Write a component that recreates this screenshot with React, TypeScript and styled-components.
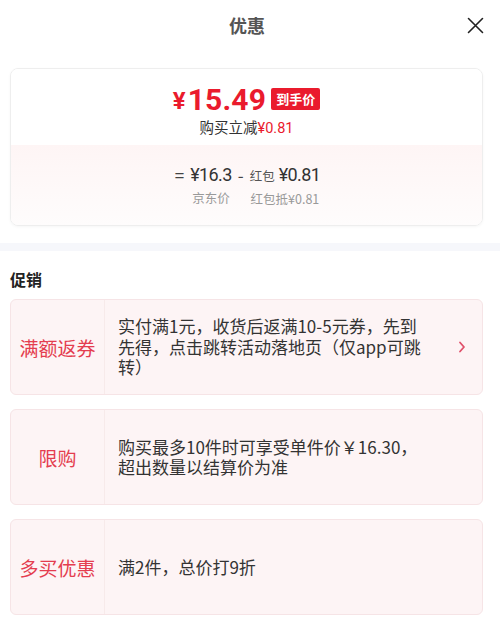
import React from "react";
import styled, { createGlobalStyle } from "styled-components";

const Global = createGlobalStyle`
  html, body { margin: 0; padding: 0; background: #fff; }
  body { font-family: "Noto Sans CJK SC", "Noto Sans", sans-serif; color: #333; }
  * { box-sizing: border-box; }
`;

const Page = styled.div`
  width: 500px;
  height: 622px;
  overflow: hidden;
  background: #fff;
`;

const Header = styled.div`
  position: relative;
  height: 50px;
  display: flex;
  align-items: center;
  justify-content: center;
`;

const Title = styled.div`
  font-size: 18px;
  font-weight: 700;
  color: #555;
  margin-left: -6px;
`;

const Close = styled.div`
  position: absolute;
  right: 16px;
  top: 17px;
  width: 17px;
  height: 17px;
  display: flex;
`;

const Wrap = styled.div`
  padding: 18px 17px 0 10px;
`;

const PriceCard = styled.div`
  border: 1px solid #eeeeee;
  border-radius: 8px;
  overflow: hidden;
  box-shadow: 0 1px 3px rgba(0, 0, 0, 0.04);
`;

const Top = styled.div`
  height: 76px;
  display: flex;
  flex-direction: column;
  align-items: center;
  padding-top: 14px;
  background: #fff;
`;

const PriceRow = styled.div`
  display: flex;
  align-items: center;
  color: #ea1b2d;
  font-family: Roboto, "Noto Sans CJK SC", sans-serif;
  font-weight: 700;
  height: 32px;
`;

const Yen = styled.span`
  font-size: 24px;
  margin-right: 2px;
  margin-top: 4px;
`;

const Big = styled.span`
  font-size: 30px;
  letter-spacing: 0.2px;
`;

const Badge = styled.span`
  margin-left: 5px;
  background: #ea1b2d;
  color: #fff;
  font-family: "Noto Sans CJK SC", sans-serif;
  font-size: 13px;
  font-weight: 700;
  height: 22px;
  line-height: 22px;
  padding: 0 5px;
  border-radius: 2px;
`;

const Sub = styled.div`
  font-size: 14.5px;
  color: #333;
  margin-top: 2px;
  line-height: 20px;
`;

const Red = styled.span`
  color: #ea1b2d;
  font-family: Roboto, "Noto Sans CJK SC", sans-serif;
`;

const Bottom = styled.div`
  height: 80px;
  background: linear-gradient(#fef5f5, #fefcfc);
  display: flex;
  justify-content: center;
  align-items: flex-start;
  padding-top: 18px;
  padding-left: 2px;
`;

const Sym = styled.span<{ $before?: number }>`
  font-size: 17px;
  color: #444;
  line-height: 24px;
  padding: 0 6px 0 ${(p) => p.$before ?? 0}px;
`;

const Col = styled.div`
  display: flex;
  flex-direction: column;
  align-items: center;
`;

const Value = styled.div`
  font-family: Roboto, "Noto Sans CJK SC", sans-serif;
  font-size: 18px;
  letter-spacing: -0.6px;
  color: #333;
  line-height: 24px;
  display: flex;
  align-items: baseline;
`;

const Small = styled.span`
  font-family: "Noto Sans CJK SC", sans-serif;
  font-size: 12.5px;
  letter-spacing: 0;
  color: #555;
  margin-right: 4px;
`;

const Label = styled.div`
  font-size: 12.5px;
  color: #999;
  line-height: 20px;
  margin-top: 1px;
`;

const Band = styled.div`
  height: 8px;
  background: #f6f7fb;
  margin-top: 17px;
`;

const Section = styled.div`
  padding: 16px 17px 0 10px;
`;

const SectionTitle = styled.div`
  font-size: 16px;
  font-weight: 700;
  color: #222;
  line-height: 24px;
  margin-bottom: 8px;
`;

const List = styled.div`
  display: flex;
  flex-direction: column;
  gap: 14px;
`;

const Promo = styled.div`
  display: flex;
  min-height: 96px;
  background: #fdf4f5;
  border: 1px solid #f6e4e6;
  border-radius: 6px;
`;

const Tag = styled.div`
  width: 94px;
  flex: none;
  display: flex;
  align-items: center;
  justify-content: center;
  color: #e43d4f;
  font-size: 19px;
  border-right: 1px solid #f7eaea;
`;

const Desc = styled.div`
  flex: 1;
  min-width: 0;
  display: flex;
  align-items: center;
  padding: 0 16px 0 13px;
  font-size: 17px;
  line-height: 20.5px;
  color: #333;
`;

const DescText = styled.div`
  max-width: 310px;
`;

const Arrow = styled.div`
  margin-left: auto;
  width: 8px;
  display: flex;
`;

const promos = [
  { tag: "满额返券", text: "实付满1元，收货后返满10-5元券，先到先得，点击跳转活动落地页（仅app可跳转）", arrow: true },
  { tag: "限购", text: "购买最多10件时可享受单件价￥16.30，超出数量以结算价为准", arrow: false },
  { tag: "多买优惠", text: "满2件，总价打9折", arrow: false },
];

export default function App() {
  return (
    <Page>
      <Global />
      <Header>
        <Title>优惠</Title>
        <Close>
          <svg width="17" height="17" viewBox="0 0 17 17">
            <path d="M1.5 1.5 L15.5 15.5 M15.5 1.5 L1.5 15.5" stroke="#222" strokeWidth="1.6" strokeLinecap="round" />
          </svg>
        </Close>
      </Header>
      <Wrap>
        <PriceCard>
          <Top>
            <PriceRow>
              <Yen>¥</Yen>
              <Big>15.49</Big>
              <Badge>到手价</Badge>
            </PriceRow>
            <Sub>
              购买立减<Red>¥0.81</Red>
            </Sub>
          </Top>
          <Bottom>
            <Sym>=</Sym>
            <Col>
              <Value>¥16.3</Value>
              <Label>京东价</Label>
            </Col>
            <Sym $before={6}>-</Sym>
            <Col>
              <Value>
                <Small>红包</Small>¥0.81
              </Value>
              <Label>红包抵¥0.81</Label>
            </Col>
          </Bottom>
        </PriceCard>
      </Wrap>
      <Band />
      <Section>
        <SectionTitle>促销</SectionTitle>
        <List>
          {promos.map((p) => (
            <Promo key={p.tag}>
              <Tag>{p.tag}</Tag>
              <Desc>
                <DescText>{p.text}</DescText>
                {p.arrow && (
                  <Arrow>
                    <svg width="8" height="12" viewBox="0 0 8 12">
                      <path d="M2 1.5 L6 6 L2 10.5" stroke="#e0506a" strokeWidth="1.8" fill="none" strokeLinecap="round" strokeLinejoin="round" />
                    </svg>
                  </Arrow>
                )}
              </Desc>
            </Promo>
          ))}
        </List>
      </Section>
    </Page>
  );
}
